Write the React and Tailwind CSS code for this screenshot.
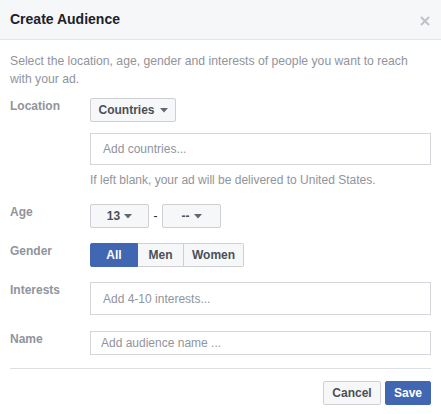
import React from "react";

const Caret = () => (
  <svg width="8" height="5" viewBox="0 0 8 5" className="shrink-0">
    <path d="M0 0h8L4 4.5z" fill="#606770" />
  </svg>
);

const Label = ({ children }) => (
  <div className="w-[80px] shrink-0 text-[12px] leading-[16px] font-bold text-[#90949c]">
    {children}
  </div>
);

const App = () => {
  return (
    <div className="w-[441px] h-[414px] bg-white font-['Liberation_Sans',Arial,sans-serif] text-[12px]">
      {/* Header */}
      <div className="h-[40px] bg-[#f6f7f9] border-b border-[#e5e5e5] pl-[10px] pr-[11px] flex items-center justify-between">
        <h1 className="text-[14px] font-bold text-[#1d2129]">Create Audience</h1>
        <svg width="10" height="10" viewBox="0 0 10 10" className="mt-[3px]">
          <path d="M1 1l8 8M9 1l-8 8" stroke="#bec2c9" strokeWidth="2" />
        </svg>
      </div>

      <div className="px-[10px] pt-[12px]">
        <p className="max-w-[404px] text-[12.2px] leading-[18px] text-[#90949c]">
          Select the location, age, gender and interests of people you want to reach with your ad.
        </p>

        {/* Location */}
        <div className="flex mt-[10px]">
          <Label>Location</Label>
          <div className="flex-1">
            <button className="h-[24px] w-[86px] flex items-center justify-center gap-[5px] bg-[#f6f7f9] border border-[#ced0d4] rounded-[2px] font-bold text-[#4b4f56]">
              Countries
              <Caret />
            </button>
            <input
              placeholder="Add countries..."
              className="mt-[11px] block w-full h-[32px] border border-[#d3d6db] px-[12px] text-[12px] placeholder:text-[#90949c] outline-none"
            />
            <p className="mt-[6px] leading-[18px] text-[#90949c]">
              If left blank, your ad will be delivered to United States.
            </p>
          </div>
        </div>

        {/* Age */}
        <div className="flex mt-[15px]">
          <Label>Age</Label>
          <div className="flex items-center">
            <button className="h-[24px] w-[59px] flex items-center justify-center gap-[4px] bg-[#f6f7f9] border border-[#ced0d4] rounded-[2px] font-bold text-[#4b4f56]">
              13
              <Caret />
            </button>
            <span className="w-[13px] text-center text-[#1d2129]">-</span>
            <button className="h-[24px] w-[59px] flex items-center justify-center gap-[4px] bg-[#f6f7f9] border border-[#ced0d4] rounded-[2px] font-bold text-[#4b4f56]">
              --
              <Caret />
            </button>
          </div>
        </div>

        {/* Gender */}
        <div className="flex mt-[15px]">
          <Label>Gender</Label>
          <div className="flex font-bold">
            <button className="h-[24px] w-[48px] bg-[#4267b2] border border-[#4267b2] rounded-l-[2px] text-white">
              All
            </button>
            <button className="h-[24px] w-[46px] bg-[#f6f7f9] border-y border-r border-[#ced0d4] text-[#4b4f56]">
              Men
            </button>
            <button className="h-[24px] w-[60px] bg-[#f6f7f9] border-y border-r border-[#ced0d4] rounded-r-[2px] text-[#4b4f56]">
              Women
            </button>
          </div>
        </div>

        {/* Interests */}
        <div className="flex mt-[15px]">
          <Label>Interests</Label>
          <input
            placeholder="Add 4-10 interests..."
            className="flex-1 h-[33px] border border-[#d3d6db] px-[12px] text-[12px] placeholder:text-[#90949c] outline-none"
          />
        </div>

        {/* Name */}
        <div className="flex mt-[16px]">
          <Label>Name</Label>
          <input
            placeholder="Add audience name ..."
            className="flex-1 h-[24px] border border-[#d3d6db] px-[10px] text-[12px] placeholder:text-[#90949c] outline-none"
          />
        </div>

        <div className="mt-[13px] border-t border-[#dddfe2]" />

        <div className="flex justify-end gap-[4px] mt-[12px]">
          <button className="h-[24px] w-[58px] bg-[#f6f7f9] border border-[#ced0d4] rounded-[2px] font-bold text-[#4b4f56]">
            Cancel
          </button>
          <button className="h-[24px] w-[46px] bg-[#4267b2] border border-[#4267b2] rounded-[2px] font-bold text-white">
            Save
          </button>
        </div>
      </div>
    </div>
  );
};

export default App;
